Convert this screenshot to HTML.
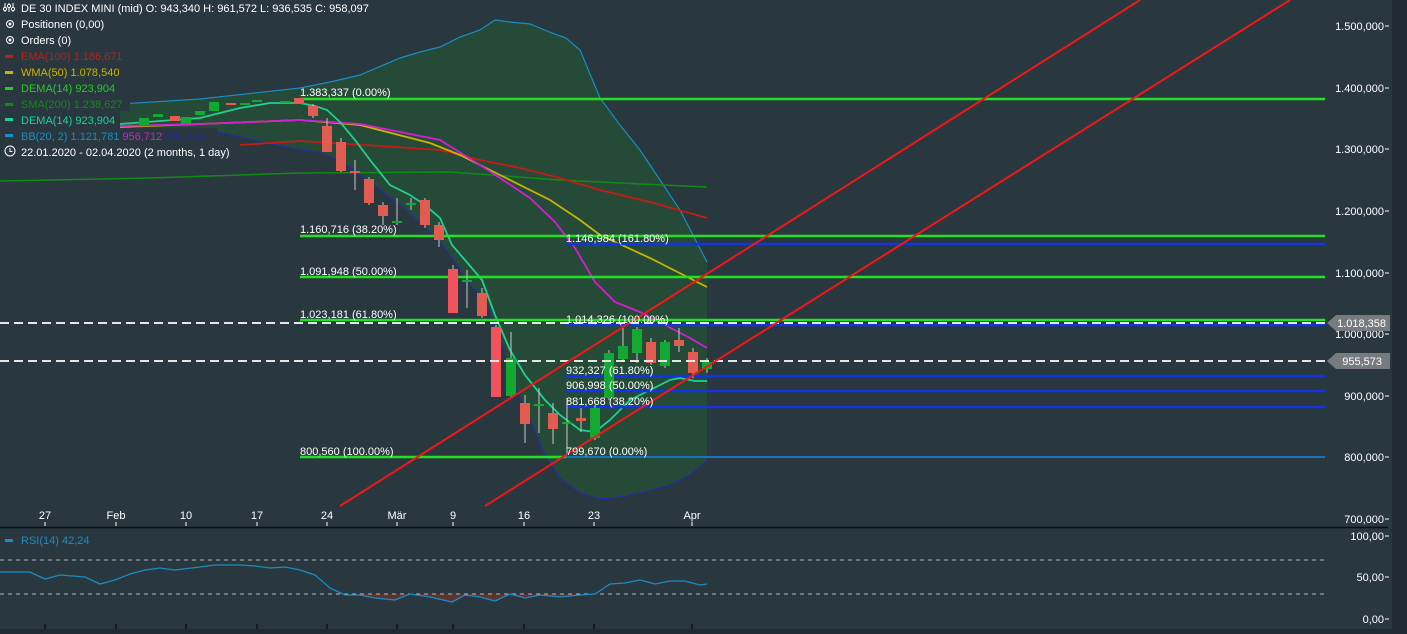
<!DOCTYPE html>
<html><head><meta charset="utf-8"><style>
html,body{margin:0;padding:0;background:#29373e;width:1407px;height:634px;overflow:hidden}
svg{display:block}
text{font-family:"Liberation Sans",Arial,sans-serif;font-size:11px}
</style></head><body>
<svg width="1407" height="634" viewBox="0 0 1407 634" xmlns="http://www.w3.org/2000/svg">
<rect width="1407" height="634" fill="#29373e"/>
<rect x="1392" y="0" width="15" height="634" fill="#1f2b30"/>
<rect x="0" y="629" width="1392" height="5" fill="#1f2b30"/>
<!-- BB fill -->
<path d="M120,104 L200,99 L300,88 L330,82 L360,75 L400,58 L420,52 L440,47 L460,37 L480,30 L495,20 L510,22 L530,24 L552,33 L566,38 L580,50 L600,98 L620,125 L640,150 L660,180 L680,210 L707,262 L707,460 L690,475 L670,485 L640,493 L620,497 L600,499 L580,493 L560,478 L545,455 L530,420 L515,385 L500,340 L485,300 L470,285 L455,262 L440,242 L420,222 L400,205 L370,182 L345,164 L320,152 L300,150 L200,128 L120,128 Z" fill="#264a38"/>
<!-- BB upper -->
<path d="M0,108 L120,104 L200,99 L300,88 L330,82 L360,75 L400,58 L420,52 L440,47 L460,37 L480,30 L495,20 L510,22 L530,24 L552,33 L566,38 L580,50 L600,98 L620,125 L640,150 L660,180 L680,210 L707,262" fill="none" stroke="#1a8cc4" stroke-width="1.2"/>
<!-- BB lower -->
<path d="M0,140 L120,128 L200,128 L300,150 L320,152 L345,164 L370,182 L400,205 L420,222 L440,242 L455,262 L470,285 L485,300 L500,340 L515,385 L530,420 L545,455 L560,478 L580,493 L600,499 L620,497 L640,493 L670,485 L690,475 L707,460" fill="none" stroke="#2a2aa0" stroke-width="1.2"/>
<!-- SMA200 -->
<path d="M0,181 L150,178 L300,173 L450,172 L560,180 L640,184 L707,187" fill="none" stroke="#118a18" stroke-width="1.5"/>
<!-- EMA100 -->
<path d="M240,145 L300,141 L380,146 L440,150 L480,160 L520,168 L560,178 L600,190 L650,202 L707,218" fill="none" stroke="#c41c10" stroke-width="1.8"/>
<!-- WMA -->
<path d="M0,130 L120,127 L200,124 L300,120 L360,125 L430,143 L460,155 L480,165 L500,175 L550,200 L580,220 L600,235 L650,258 L707,287" fill="none" stroke="#c8b400" stroke-width="1.8"/>
<!-- BB mid -->
<path d="M0,128 L120,126 L200,124 L300,120 L360,124 L440,140 L480,165 L500,178 L530,198 L555,222 L575,248 L595,282 L615,302 L640,312 L665,325 L690,338 L707,348" fill="none" stroke="#d21ed2" stroke-width="1.8"/>
<!-- DEMA -->
<path d="M0,125 L120,124 L200,118 L240,108 L270,103 L300,103 L315,106 L327,110 L340,122 L355,140 L370,160 L390,185 L410,195 L425,205 L440,218 L452,245 L465,260 L482,280 L495,315 L510,350 L525,375 L545,400 L560,415 L580,430 L595,432 L610,420 L630,400 L650,390 L670,380 L680,378 L695,381 L707,381" fill="none" stroke="#1fd090" stroke-width="1.8"/>
<!-- fib green lines -->
<g stroke="#22e022" stroke-width="2.5">
<line x1="300" y1="99" x2="1325" y2="99"/>
<line x1="300" y1="236" x2="1325" y2="236"/>
<line x1="300" y1="277" x2="1325" y2="277"/>
<line x1="300" y1="320" x2="1325" y2="320"/>
<line x1="300" y1="457" x2="566" y2="457"/>
</g>
<g stroke="#1036e0" stroke-width="2.5">
<line x1="566" y1="244" x2="1325" y2="244"/>
<line x1="566" y1="325" x2="1325" y2="325"/>
<line x1="566" y1="376" x2="1325" y2="376"/>
<line x1="566" y1="391" x2="1325" y2="391"/>
<line x1="566" y1="407" x2="1325" y2="407"/>
</g>
<line x1="566" y1="457" x2="1325" y2="457" stroke="#1a70c0" stroke-width="2"/>
<!-- candles -->
<g stroke="#c8c8c8" stroke-width="1">
<line x1="313" y1="104" x2="313" y2="118"/><line x1="355" y1="160" x2="355" y2="190"/><line x1="369" y1="177" x2="369" y2="205"/>
<line x1="383" y1="202" x2="383" y2="225"/><line x1="397" y1="198" x2="397" y2="225"/><line x1="411" y1="198" x2="411" y2="210"/>
<line x1="425" y1="198" x2="425" y2="228"/><line x1="439" y1="222" x2="439" y2="247"/><line x1="467" y1="270" x2="467" y2="308"/>
<line x1="482" y1="288" x2="482" y2="318"/><line x1="511" y1="332" x2="511" y2="398"/><line x1="525" y1="395" x2="525" y2="443"/>
<line x1="539" y1="388" x2="539" y2="433"/><line x1="553" y1="403" x2="553" y2="444"/><line x1="567" y1="398" x2="567" y2="455"/>
<line x1="581" y1="408" x2="581" y2="432"/><line x1="609" y1="350" x2="609" y2="400"/><line x1="623" y1="328" x2="623" y2="362"/>
<line x1="637" y1="327" x2="637" y2="363"/><line x1="651" y1="338" x2="651" y2="365"/><line x1="665" y1="340" x2="665" y2="368"/>
<line x1="679" y1="328" x2="679" y2="352"/><line x1="693" y1="348" x2="693" y2="378"/><line x1="707" y1="358" x2="707" y2="373"/>
<line x1="327" y1="118" x2="327" y2="152"/><line x1="341" y1="138" x2="341" y2="172"/><line x1="453" y1="265" x2="453" y2="313"/><line x1="496" y1="325" x2="496" y2="397"/>
<line x1="595" y1="405" x2="595" y2="440"/>
</g>
<g fill="#e25c52">
<rect x="294" y="98" width="10" height="6"/><rect x="308" y="106" width="10" height="10"/><rect x="322" y="126" width="10" height="26"/>
<rect x="336" y="142" width="10" height="29"/><rect x="350" y="171" width="10" height="2"/><rect x="364" y="179" width="10" height="24"/>
<rect x="378" y="205" width="10" height="11"/><rect x="420" y="200" width="10" height="25"/><rect x="434" y="225" width="10" height="15"/>
<rect x="448" y="269" width="10" height="44" fill="#f2525c"/><rect x="477" y="293" width="10" height="23"/><rect x="491" y="327" width="10" height="70" fill="#f2525c"/>
<rect x="520" y="403" width="10" height="21"/><rect x="548" y="413" width="10" height="16"/><rect x="576" y="418" width="10" height="3"/>
<rect x="646" y="342" width="10" height="21"/><rect x="674" y="340" width="10" height="6"/><rect x="688" y="352" width="10" height="21"/>
<rect x="170" y="116" width="10" height="5"/><rect x="226" y="103" width="10" height="2"/>
</g>
<g fill="#12a832">
<rect x="139" y="118" width="10" height="7"/><rect x="153" y="114" width="10" height="3"/><rect x="181" y="117" width="10" height="7"/>
<rect x="195" y="111" width="10" height="4"/><rect x="209" y="102" width="10" height="9"/><rect x="240" y="103" width="10" height="2"/>
<rect x="252" y="100" width="10" height="2"/><rect x="280" y="101" width="10" height="2"/>
<rect x="392" y="221" width="10" height="2"/><rect x="406" y="203" width="10" height="2"/><rect x="462" y="280" width="10" height="2"/>
<rect x="506" y="358" width="10" height="38"/><rect x="534" y="404" width="10" height="2"/><rect x="562" y="422" width="10" height="2"/>
<rect x="590" y="408" width="10" height="30"/><rect x="604" y="353" width="10" height="45"/><rect x="618" y="346" width="10" height="13"/>
<rect x="632" y="329" width="10" height="24"/><rect x="660" y="342" width="10" height="24"/><rect x="702" y="362" width="10" height="7"/>
</g>
<!-- dashed -->
<g stroke="#e6e6e6" stroke-width="2" stroke-dasharray="9,5">
<line x1="0" y1="323" x2="1325" y2="323"/>
<line x1="0" y1="361" x2="1325" y2="361"/>
</g>
<!-- red channel -->
<line x1="340" y1="506" x2="1140" y2="0" stroke="#f01818" stroke-width="2"/>
<line x1="485" y1="506" x2="1290" y2="0" stroke="#f01818" stroke-width="2"/>
<!-- fib labels -->
<g fill="#ffffff">
<text x="300" y="96">1.383,337 (0.00%)</text>
<text x="300" y="233">1.160,716 (38.20%)</text>
<text x="300" y="275">1.091,948 (50.00%)</text>
<text x="300" y="318">1.023,181 (61.80%)</text>
<text x="300" y="455">800,560 (100.00%)</text>
<text x="566" y="242">1.146,984 (161.80%)</text>
<text x="566" y="323">1.014,326 (100.00%)</text>
<text x="566" y="374">932,327 (61.80%)</text>
<text x="566" y="389">906,998 (50.00%)</text>
<text x="566" y="405">881,668 (38.20%)</text>
<text x="566" y="455">799,670 (0.00%)</text>
</g>
<!-- price axis -->
<g fill="#ffffff" text-anchor="end">
<text x="1384" y="30">1.500,000</text><text x="1384" y="92">1.400,000</text><text x="1384" y="153">1.300,000</text>
<text x="1384" y="215">1.200,000</text><text x="1384" y="277">1.100,000</text><text x="1384" y="338">1.000,000</text>
<text x="1384" y="400">900,000</text><text x="1384" y="461">800,000</text><text x="1384" y="523">700,000</text>
<text x="1384" y="540">100,00</text><text x="1384" y="581">50,00</text><text x="1384" y="623">0,00</text>
</g>
<g stroke="#ffffff" stroke-width="1">
<line x1="1385" y1="26" x2="1389" y2="26"/><line x1="1385" y1="88" x2="1389" y2="88"/><line x1="1385" y1="149" x2="1389" y2="149"/>
<line x1="1385" y1="211" x2="1389" y2="211"/><line x1="1385" y1="273" x2="1389" y2="273"/><line x1="1385" y1="334" x2="1389" y2="334"/>
<line x1="1385" y1="396" x2="1389" y2="396"/><line x1="1385" y1="457" x2="1389" y2="457"/><line x1="1385" y1="519" x2="1389" y2="519"/>
<line x1="1385" y1="536" x2="1389" y2="536"/><line x1="1385" y1="577" x2="1389" y2="577"/><line x1="1385" y1="619" x2="1389" y2="619"/>
</g>
<path d="M1327,323 L1336,315 L1390,315 L1390,331 L1336,331 Z" fill="#777b7d"/>
<text x="1386" y="327" fill="#ffffff" text-anchor="end">1.018,358</text>
<path d="M1327,361 L1336,353 L1390,353 L1390,369 L1336,369 Z" fill="#777b7d"/>
<text x="1382" y="365" fill="#ffffff" text-anchor="end">955,573</text>
<!-- date axis -->
<g fill="#ffffff" text-anchor="middle">
<text x="45" y="519">27</text><text x="116" y="519">Feb</text><text x="186" y="519">10</text><text x="257" y="519">17</text>
<text x="327" y="519">24</text><text x="397" y="519">Mär</text><text x="453" y="519">9</text><text x="524" y="519">16</text>
<text x="594" y="519">23</text><text x="692" y="519">Apr</text>
</g>
<g stroke="#ffffff"><line x1="45" y1="522" x2="45" y2="526"/><line x1="116" y1="522" x2="116" y2="526"/><line x1="186" y1="522" x2="186" y2="526"/><line x1="257" y1="522" x2="257" y2="526"/><line x1="327" y1="522" x2="327" y2="526"/><line x1="397" y1="522" x2="397" y2="526"/><line x1="453" y1="522" x2="453" y2="526"/><line x1="524" y1="522" x2="524" y2="526"/><line x1="594" y1="522" x2="594" y2="526"/><line x1="692" y1="522" x2="692" y2="526"/></g>
<line x1="0" y1="527.5" x2="1388" y2="527.5" stroke="#0b0f12" stroke-width="1.5"/>
<!-- RSI -->
<g stroke="#000" stroke-width="1"><line x1="45" y1="624" x2="45" y2="629"/><line x1="116" y1="624" x2="116" y2="629"/><line x1="186" y1="624" x2="186" y2="629"/><line x1="257" y1="624" x2="257" y2="629"/><line x1="327" y1="624" x2="327" y2="629"/><line x1="397" y1="624" x2="397" y2="629"/><line x1="453" y1="624" x2="453" y2="629"/><line x1="524" y1="624" x2="524" y2="629"/><line x1="594" y1="624" x2="594" y2="629"/><line x1="692" y1="624" x2="692" y2="629"/></g>
<path d="M335,594 L345,595 L360,595 L375,598 L395,600 L410,594 L430,597 L452,602 L465,595 L480,597 L495,601 L510,594 L525,598 L540,595 L560,597 L580,595 L595,594 Z" fill="#5a3434"/>
<g stroke="#b8b8b8" stroke-width="1" stroke-dasharray="4,4">
<line x1="0" y1="560" x2="1325" y2="560"/><line x1="0" y1="594" x2="1325" y2="594"/>
</g>
<path d="M0,572 L30,572 L45,579 L60,575 L85,577 L100,584 L115,580 L130,574 L145,570 L160,568 L175,570 L200,567 L215,565 L240,565 L255,566 L270,568 L285,567 L300,570 L315,575 L330,588 L345,595 L360,595 L375,598 L395,600 L410,594 L430,597 L452,602 L465,595 L480,597 L495,601 L510,594 L525,598 L540,595 L560,597 L580,595 L595,594 L610,584 L625,583 L640,580 L655,584 L670,581 L685,581 L700,585 L707,584" fill="none" stroke="#1a8cc4" stroke-width="1.3"/>
<rect x="5" y="539" width="8" height="3" fill="#1a8cc4"/>
<text x="21" y="544" fill="#1a8cc4">RSI(14)  42,24</text>
<!-- legend -->
<rect x="0" y="130" width="340" height="31" fill="#29373e" opacity="0"/>
<g>
<path d="M5,3 v9 M9,3 v9 M13,3 v9" stroke="#fff" stroke-width="1"/><circle cx="5" cy="9" r="1.6" fill="#29373e" stroke="#fff"/><circle cx="9" cy="6" r="1.6" fill="#29373e" stroke="#fff"/><circle cx="13" cy="9" r="1.6" fill="#29373e" stroke="#fff"/>
<text x="21" y="12" fill="#fff">DE 30 INDEX MINI (mid)  O: 943,340  H: 961,572  L: 936,535  C: 958,097</text>
<circle cx="10" cy="24" r="3.5" fill="none" stroke="#fff"/><circle cx="10" cy="24" r="1.5" fill="#fff"/>
<text x="21" y="28" fill="#fff">Positionen (0,00)</text>
<circle cx="10" cy="40" r="3.5" fill="none" stroke="#fff"/><circle cx="10" cy="40" r="1.5" fill="#fff"/>
<text x="21" y="44" fill="#fff">Orders (0)</text>
<rect x="5" y="55" width="8" height="3" fill="#c41c10"/><text x="21" y="60" fill="#c41c10">EMA(100)  1.186,671</text>
<rect x="5" y="71" width="8" height="3" fill="#c8b400"/><text x="21" y="76" fill="#c8b400">WMA(50)  1.078,540</text>
<rect x="5" y="87" width="8" height="3" fill="#2ac82a"/><text x="21" y="92" fill="#2ac82a">DEMA(14)  923,904</text>
<rect x="0" y="96" width="130" height="15" fill="#29373e"/>
<rect x="5" y="103" width="8" height="3" fill="#118a18"/><text x="21" y="108" fill="#118a18">SMA(200)  1.238,627</text>
<rect x="0" y="112" width="120" height="16" fill="#29373e"/>
<rect x="5" y="118" width="8" height="3" fill="#1fd090"/><text x="21" y="124" fill="#1fd090">DEMA(14)  923,904</text>
<rect x="0" y="128" width="217" height="16" fill="#29373e"/>
<rect x="5" y="134" width="8" height="3" fill="#1a8cc4"/><text x="21" y="140" fill="#1a8cc4">BB(20, 2)  1.121,781 <tspan fill="#d21ed2">956,712</tspan> <tspan fill="#2a2aa0">791,643</tspan></text>
<rect x="0" y="144" width="238" height="16" fill="#29373e"/>
<circle cx="10" cy="151" r="5" fill="none" stroke="#fff"/><path d="M10,148 v3.5 h2.5" stroke="#fff" fill="none"/>
<text x="21" y="156" fill="#fff">22.01.2020 - 02.04.2020   (2 months, 1 day)</text>
</g>
</svg>
</body></html>
